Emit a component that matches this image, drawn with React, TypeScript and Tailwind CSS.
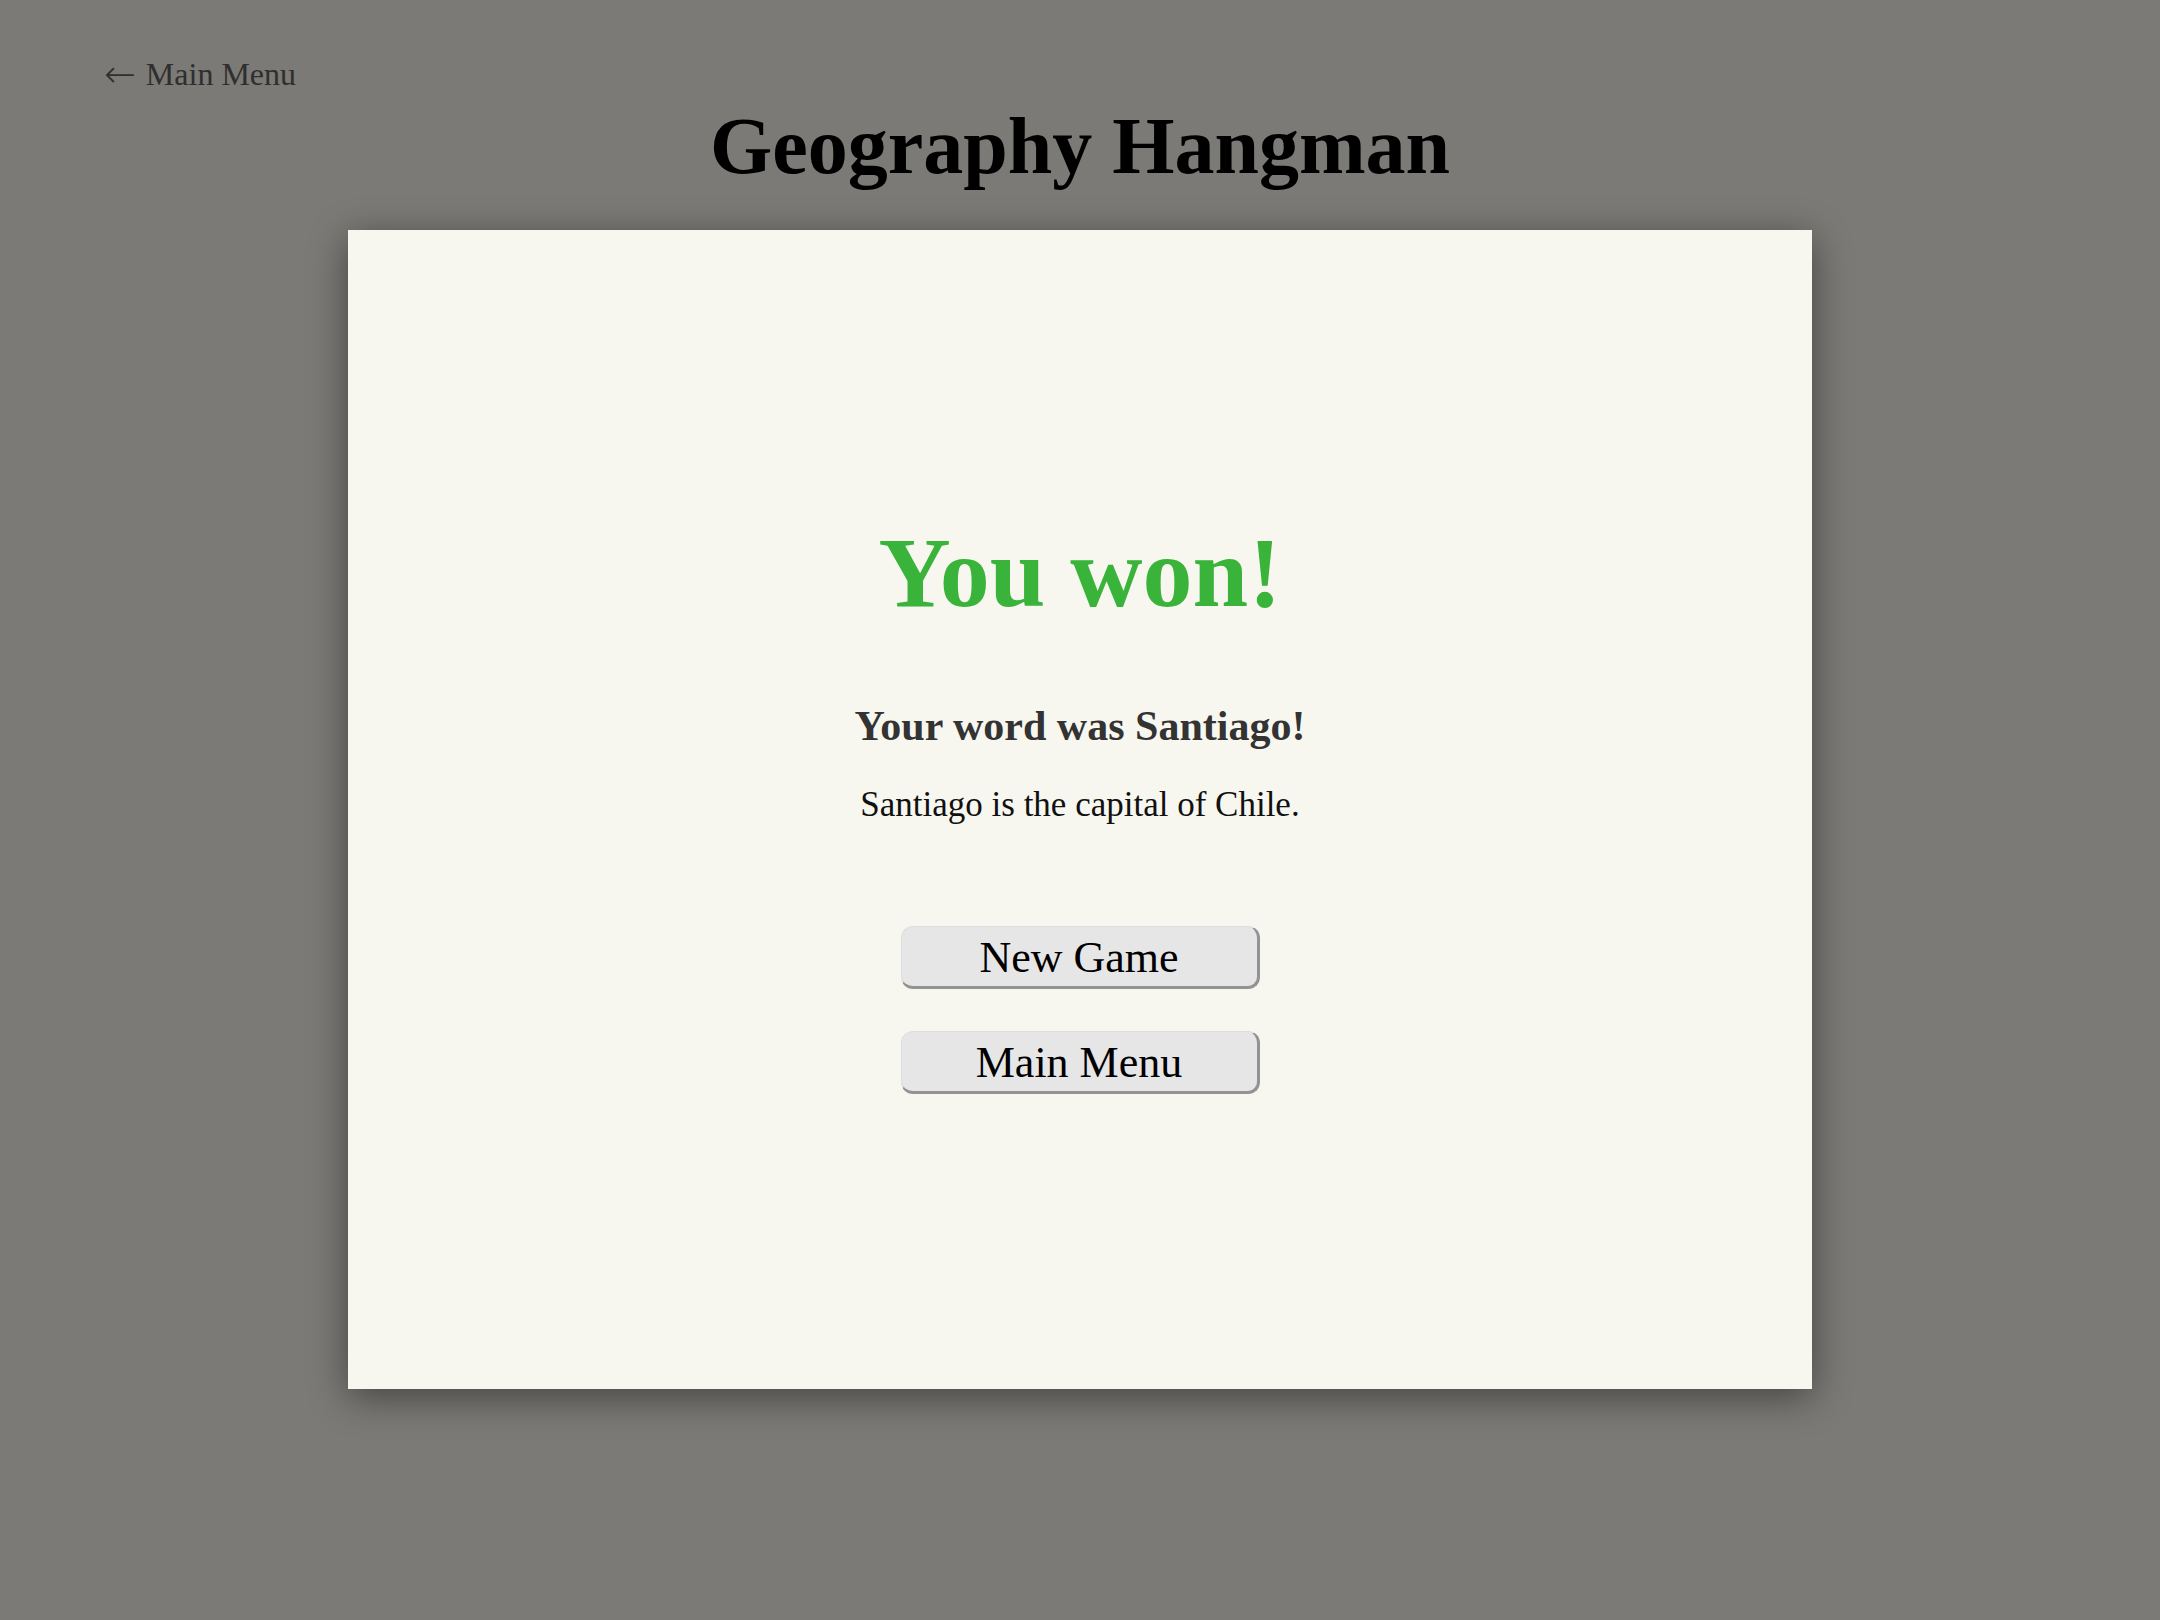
export default function App() {
  return (
    <div className="min-h-screen w-full bg-[#7b7a76] font-['Liberation_Serif',_'Times_New_Roman',_serif] pb-[230px]">
      <div className="pt-[58px] pl-[104px]">
        <a href="#" className="flex h-[32px] items-center gap-[10px] text-[32px] leading-none text-[#2f2f2f]">
          <span className="font-['DejaVu_Sans',_sans-serif] text-[38px] font-light leading-[32px]">←</span>
          <span>Main Menu</span>
        </a>
      </div>

      <h1 className="mt-[16px] text-center text-[80px] font-bold leading-none text-black">Geography Hangman</h1>

      <div className="mx-auto mt-[44px] flex h-[1159px] w-[1464px] flex-col items-center justify-center bg-[#f7f7f0] shadow-[0_8px_36px_rgba(0,0,0,0.45)]">
        <h2 className="mt-[-2px] text-[100px] font-bold leading-none text-[#39b339]">You won!</h2>
        <h3 className="mt-[82px] text-[42px] font-bold leading-none text-[#333333]">Your word was Santiago!</h3>
        <p className="mt-[40px] text-[35px] leading-none text-[#111111]">Santiago is the capital of Chile.</p>

        <div className="mt-[104px] flex flex-col gap-[42px]">
          <button className="h-[63px] w-[359px] rounded-[12px] border-t border-l border-r-[3px] border-b-[3px] border-t-[#dedede] border-l-[#dedede] border-r-[#939393] border-b-[#939393] bg-[#e6e6e6] pt-[2px] text-[44px] leading-none text-black">
            New Game
          </button>
          <button className="h-[63px] w-[359px] rounded-[12px] border-t border-l border-r-[3px] border-b-[3px] border-t-[#dedede] border-l-[#dedede] border-r-[#939393] border-b-[#939393] bg-[#e6e6e6] pt-[2px] text-[44px] leading-none text-black">
            Main Menu
          </button>
        </div>
      </div>
    </div>
  );
}
